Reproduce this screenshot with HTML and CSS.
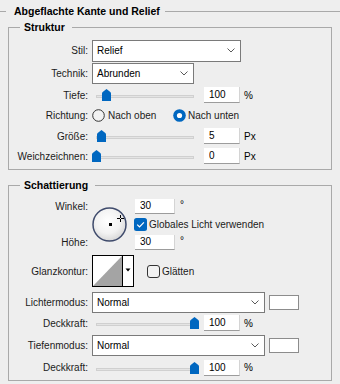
FILE: index.html
```html
<!DOCTYPE html>
<html lang="de">
<head>
<meta charset="UTF-8">
<title>Abgeflachte Kante und Relief</title>
<link rel="stylesheet" href="styles.css">
</head>
<body>
<fieldset class="group outer">
	<legend>Abgeflachte Kante und Relief</legend>

	<fieldset class="group box struktur">
		<legend>Struktur</legend>
		<div class="row h23">
			<label class="lbl">Stil:</label>
			<div class="combo w-stil"><span>Relief</span><svg class="chev" width="8" height="5" viewBox="0 0 8 5"><polyline points="0.5,0.5 4,4 7.5,0.5" /></svg></div>
		</div>
		<div class="row h23">
			<label class="lbl">Technik:</label>
			<div class="combo w-tech"><span>Abrunden</span><svg class="chev" width="8" height="5" viewBox="0 0 8 5"><polyline points="0.5,0.5 4,4 7.5,0.5" /></svg></div>
		</div>
		<div class="row h20">
			<label class="lbl">Tiefe:</label>
			<div class="slider"><div class="track"></div><svg class="thumb" style="left:10px" width="9" height="12" viewBox="0 0 9 12"><path d="M0 4.5 Q0 3.4 1 2.7 L4.5 0 L8 2.7 Q9 3.4 9 4.5 V12 H0 Z" /></svg></div>
			<input class="num" type="text" value="100">
			<span class="unit">%</span>
		</div>
		<div class="row h21">
			<label class="lbl">Richtung:</label>
			<div class="opt first">
				<svg width="13" height="13" viewBox="0 0 13 13"><circle cx="6.5" cy="6.5" r="5.8" fill="#f2f2f2" stroke="#333" stroke-width="1" /></svg>
				<span>Nach oben</span>
			</div>
			<div class="opt">
				<svg width="13" height="13" viewBox="0 0 13 13"><circle cx="6.5" cy="6.5" r="6.3" fill="#0067c0" /><circle cx="6.5" cy="6.5" r="2.6" fill="#fff" /></svg>
				<span>Nach unten</span>
			</div>
		</div>
		<div class="row h20">
			<label class="lbl">Größe:</label>
			<div class="slider"><div class="track"></div><svg class="thumb" style="left:5px" width="9" height="12" viewBox="0 0 9 12"><path d="M0 4.5 Q0 3.4 1 2.7 L4.5 0 L8 2.7 Q9 3.4 9 4.5 V12 H0 Z" /></svg></div>
			<input class="num" type="text" value="5">
			<span class="unit">Px</span>
		</div>
		<div class="row h20">
			<label class="lbl">Weichzeichnen:</label>
			<div class="slider"><div class="track"></div><svg class="thumb" style="left:0px" width="9" height="12" viewBox="0 0 9 12"><path d="M0 4.5 Q0 3.4 1 2.7 L4.5 0 L8 2.7 Q9 3.4 9 4.5 V12 H0 Z" /></svg></div>
			<input class="num" type="text" value="0">
			<span class="unit">Px</span>
		</div>
	</fieldset>

	<fieldset class="group box schatt">
		<legend>Schattierung</legend>
		<div class="angle">
			<label class="lbl a-w">Winkel:</label>
			<svg class="dial" width="35" height="35" viewBox="0 0 35 35">
				<defs>
					<radialGradient id="dialfill" cx="45%" cy="40%" r="62%">
						<stop offset="0" stop-color="#ffffff" />
						<stop offset="0.6" stop-color="#f2f2f2" />
						<stop offset="1" stop-color="#d6d6d6" />
					</radialGradient>
				</defs>
				<circle cx="17.5" cy="17.5" r="16.5" fill="url(#dialfill)" stroke="#3f4b6c" stroke-width="1.5" />
				<rect x="17" y="16" width="3" height="3" fill="#000" />
				<path d="M25 11.5 H28 M29 11.5 H32 M28.5 8 V11 M28.5 12 V15" stroke="#000" stroke-width="1" fill="none" />
			</svg>
			<div class="a-in a-r1"><input class="num wide" type="text" value="30"><span class="unit deg">°</span></div>
			<div class="opt a-r2">
				<svg width="13" height="13" viewBox="0 0 13 13"><rect x="0" y="0" width="13" height="13" rx="2.5" fill="#0067c0" /><polyline points="3.2,6.6 5.5,8.9 9.9,4.3" fill="none" stroke="#fff" stroke-width="1.2" /></svg>
				<span>Globales Licht verwenden</span>
			</div>
			<label class="lbl a-h">Höhe:</label>
			<div class="a-in a-r3"><input class="num wide" type="text" value="30"><span class="unit deg">°</span></div>
		</div>
		<div class="row h38">
			<label class="lbl">Glanzkontur:</label>
			<svg class="contour" width="42" height="32" viewBox="0 0 42 32">
				<rect x="0.5" y="0.5" width="41" height="31" fill="#fff" stroke="#000" />
				<polygon points="1,31 30,1 30,31" fill="#a4a4a4" />
				<line x1="30.5" y1="1" x2="30.5" y2="31" stroke="#000" />
				<polygon points="33.5,13.5 38.5,13.5 36,16.5" fill="#000" />
			</svg>
			<div class="opt smooth">
				<svg width="13" height="13" viewBox="0 0 13 13"><rect x="0.5" y="0.5" width="12" height="12" rx="2.5" fill="#f2f2f2" stroke="#333" /></svg>
				<span>Glätten</span>
			</div>
		</div>
		<div class="row h24">
			<label class="lbl">Lichtermodus:</label>
			<div class="combo w-mode"><span>Normal</span><svg class="chev" width="8" height="5" viewBox="0 0 8 5"><polyline points="0.5,0.5 4,4 7.5,0.5" /></svg></div>
			<div class="swatch"></div>
		</div>
		<div class="row h18">
			<label class="lbl">Deckkraft:</label>
			<div class="slider"><div class="track"></div><svg class="thumb" style="left:98px" width="9" height="12" viewBox="0 0 9 12"><path d="M0 4.5 Q0 3.4 1 2.7 L4.5 0 L8 2.7 Q9 3.4 9 4.5 V12 H0 Z" /></svg></div>
			<input class="num" type="text" value="100">
			<span class="unit">%</span>
		</div>
		<div class="row h26">
			<label class="lbl">Tiefenmodus:</label>
			<div class="combo w-mode"><span>Normal</span><svg class="chev" width="8" height="5" viewBox="0 0 8 5"><polyline points="0.5,0.5 4,4 7.5,0.5" /></svg></div>
			<div class="swatch"></div>
		</div>
		<div class="row h19">
			<label class="lbl">Deckkraft:</label>
			<div class="slider"><div class="track"></div><svg class="thumb" style="left:98px" width="9" height="12" viewBox="0 0 9 12"><path d="M0 4.5 Q0 3.4 1 2.7 L4.5 0 L8 2.7 Q9 3.4 9 4.5 V12 H0 Z" /></svg></div>
			<input class="num" type="text" value="100">
			<span class="unit">%</span>
		</div>
	</fieldset>
</fieldset>
</body>
</html>
```

FILE: styles.css
```css
* { box-sizing:border-box; }
html, body { margin:0; padding:0; }
body { width:340px; height:384px; overflow:hidden; background:#eeeeee; font:10px "Liberation Sans", Arial, sans-serif; color:#1b1b1b; }

/* group boxes */
.group { margin:0; padding:0; min-width:0; border:1px solid #a9a9a9; }
.group > legend { font-size:10.5px; font-weight:bold; line-height:15px; color:#000; }
.outer { margin-top:4px; border-width:1px 0 0 0; }
.outer > legend { margin-left:6px; padding:0 5px 0 8px; }
.box { margin:0 8px; }
.box > legend { margin-left:11px; padding:0 7px 0 4px; }
.struktur { margin-top:1px; padding:4px 0 3px; }
.schatt { margin-top:8px; padding:3px 0 3px; }

/* rows */
.row { display:flex; align-items:center; }
.h18 { height:18px; }
.h19 { height:19px; }
.h20 { height:20px; }
.h21 { height:21px; }
.h23 { height:23px; }
.h24 { height:24px; }
.h26 { height:26px; }
.h38 { height:38px; }
.lbl { flex:none; width:79px; margin-right:4px; text-align:right; white-space:nowrap; }

/* combo boxes */
.combo { display:flex; align-items:center; justify-content:space-between; flex:none; padding:0 5px 0 4px; background:#fff; border:1px solid #7a7a7a; color:#000; }
.w-stil { width:149px; height:22px; }
.w-tech { width:102px; height:21px; }
.w-mode { width:173px; height:21px; }
.chev polyline { fill:none; stroke:#5a5a5a; stroke-width:1; }
.swatch { flex:none; width:30px; height:15px; margin-left:4px; background:#fff; border:1px solid #8c8c8c; }

/* sliders */
.slider { position:relative; flex:none; width:107px; height:12px; }
.track { height:3px; margin:6px 5px 0 4px; background:#e4e4e4; border:1px solid #d0d0d0; }
.thumb { position:absolute; top:0; display:block; }
.thumb path { fill:#0067c0; }

/* number fields */
.num { flex:none; width:36px; height:16px; margin:0 0 0 5px; padding:0 0 0 5px; font:inherit; color:#000; background:#fff; border:0; border-bottom:1px solid #9c9c9c; border-right:1px solid #d4d4d4; outline:none; }
.num.wide { width:40px; height:15px; margin-left:1px; }
.unit { margin-left:4px; color:#000; }
.unit.deg { margin-left:5px; margin-top:-4px; }

/* radios and checkboxes */
.opt { display:flex; align-items:center; gap:2px; white-space:nowrap; }
.opt svg { display:block; flex:none; }
.opt.first { width:81px; gap:3px; }
.smooth { margin-left:13px; }

/* angle block */
.angle { display:grid; grid-template-columns:79px 38px 1fr; grid-template-rows:20px 16px 20px; column-gap:4px; }
.angle .lbl { width:auto; margin-right:0; align-self:center; }
.a-w { grid-column:1; grid-row:1; }
.a-h { grid-column:1; grid-row:3; }
.dial { grid-column:2; grid-row:1 / span 3; margin-top:11px; display:block; }
.a-in { display:flex; align-items:center; }
.a-r1 { grid-column:3; grid-row:1; }
.a-r2 { grid-column:3; grid-row:2; }
.a-r3 { grid-column:3; grid-row:3; }
.contour { display:block; flex:none; }
```
